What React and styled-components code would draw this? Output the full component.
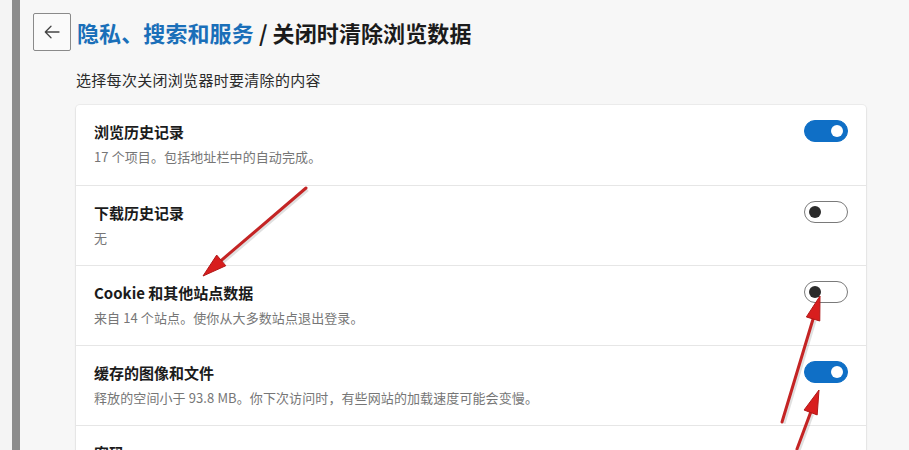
import React from "react";
import styled, { createGlobalStyle } from "styled-components";

const GlobalStyle = createGlobalStyle`
  html, body {
    margin: 0;
    padding: 0;
    background: #f7f7f7;
    font-family: "Noto Sans CJK SC", "Noto Sans", sans-serif;
    color: #1b1b1b;
  }
`;

const rows = [
  { title: "浏览历史记录", desc: "17 个项目。包括地址栏中的自动完成。", on: true },
  { title: "下载历史记录", desc: "无", on: false },
  { title: "Cookie 和其他站点数据", desc: "来自 14 个站点。使你从大多数站点退出登录。", on: false },
  { title: "缓存的图像和文件", desc: "释放的空间小于 93.8 MB。你下次访问时，有些网站的加载速度可能会变慢。", on: true },
  { title: "密码", desc: "", on: null },
];

// red annotation arrows: [tailX, tailY, tipX, tipY]
const arrows = [
  [306, 188, 203, 276],
  [782, 422, 820, 296],
  [797, 449, 819, 390],
];

function Arrow({ a }) {
  const [x1, y1, x2, y2] = a;
  const dx = x2 - x1;
  const dy = y2 - y1;
  const len = Math.hypot(dx, dy);
  const ux = dx / len;
  const uy = dy / len;
  const L = 24;
  const W = 7;
  const bx = x2 - ux * L;
  const by = y2 - uy * L;
  const px = -uy * W;
  const py = ux * W;
  const head = `${x2},${y2} ${bx + px},${by + py} ${bx - px},${by - py}`;
  return (
    <g>
      <line x1={x1 + 1.5} y1={y1 + 1.5} x2={bx + 1.5} y2={by + 1.5} stroke="rgba(0,0,0,0.12)" strokeWidth="4" />
      <line x1={x1} y1={y1} x2={bx + ux * 6} y2={by + uy * 6} stroke="#c42424" strokeWidth="3" strokeLinecap="round" />
      <polygon points={head} fill="#d81e1e" stroke="#b01818" strokeWidth="1" strokeLinejoin="round" />
    </g>
  );
}

export default function App() {
  return (
    <>
      <GlobalStyle />
      <Page>
        <Edge />
        <Rail />
        <Main>
          <Header>
            <BackButton aria-label="back">
              <svg width="20" height="20" viewBox="0 0 20 20" fill="none">
                <path d="M17 10H3.5M9 4.3L3.3 10 9 15.7" stroke="#444" strokeWidth="1.3" strokeLinecap="round" strokeLinejoin="round" />
              </svg>
            </BackButton>
            <Title>
              <Crumb>隐私、搜索和服务</Crumb> / 关闭时清除浏览数据
            </Title>
          </Header>
          <Intro>选择每次关闭浏览器时要清除的内容</Intro>
          <Card>
            {rows.map((r, i) => (
              <Row key={i} $first={i === 0}>
                <Text>
                  <RowTitle>{r.title}</RowTitle>
                  {r.desc && <RowDesc>{r.desc}</RowDesc>}
                </Text>
                {r.on !== null && (
                  <Toggle $on={r.on}>
                    <Knob $on={r.on} />
                  </Toggle>
                )}
              </Row>
            ))}
          </Card>
        </Main>
        <Overlay width="909" height="450" viewBox="0 0 909 450">
          {arrows.map((a, i) => (
            <Arrow key={i} a={a} />
          ))}
        </Overlay>
      </Page>
    </>
  );
}

const Page = styled.div`
  position: relative;
  width: 909px;
  height: 450px;
  overflow: hidden;
  display: flex;
  background: #f7f7f7;
`;

const Edge = styled.div`
  width: 12px;
  flex-shrink: 0;
  background: #f4f4f4;
`;

const Rail = styled.div`
  width: 8px;
  flex-shrink: 0;
  background: #8c8c8c;
`;

const Main = styled.div`
  padding: 13px 0 0 13px;
  display: flex;
  flex-direction: column;
`;

const Header = styled.div`
  display: flex;
  align-items: center;
  gap: 6px;
`;

const BackButton = styled.button`
  width: 38px;
  height: 38px;
  box-sizing: border-box;
  border: 1px solid #8a8a8a;
  border-radius: 2px;
  background: #fafafa;
  display: flex;
  align-items: center;
  justify-content: center;
  padding: 0;
`;

const Title = styled.h1`
  margin: 0;
  font-size: 22px;
  font-weight: 700;
  line-height: 30px;
  color: #1b1b1b;
  letter-spacing: 0.1px;
`;

const Crumb = styled.span`
  color: #1a6fb9;
`;

const Intro = styled.div`
  margin: 18px 0 0 43px;
  font-size: 15px;
  line-height: 22px;
  letter-spacing: 0.3px;
  color: #2b2b2b;
`;

const Card = styled.div`
  margin: 14px 0 0 43px;
  width: 790px;
  background: #fff;
  border-radius: 4px;
  box-shadow: 0 0 0 1px rgba(0, 0, 0, 0.04), 0 1px 3px rgba(0, 0, 0, 0.08);
`;

const Row = styled.div`
  display: flex;
  align-items: flex-start;
  justify-content: space-between;
  height: 80px;
  box-sizing: border-box;
  padding: 16px 18px 0 18px;
  border-top: ${(p) => (p.$first ? "none" : "1px solid #e6e6e6")};
`;

const Text = styled.div`
  display: flex;
  flex-direction: column;
  gap: 4px;
`;

const RowTitle = styled.div`
  font-size: 15px;
  font-weight: 700;
  line-height: 22px;
  color: #1b1b1b;
`;

const RowDesc = styled.div`
  font-size: 13px;
  line-height: 20px;
  letter-spacing: 0.1px;
  color: #767676;
`;

const Toggle = styled.div`
  width: 44px;
  height: 22px;
  box-sizing: border-box;
  margin-top: -1px;
  border-radius: 11px;
  position: relative;
  flex-shrink: 0;
  background: ${(p) => (p.$on ? "#0f6fc6" : "#fff")};
  border: 1px solid ${(p) => (p.$on ? "#0f6fc6" : "#7a7a7a")};
`;

const Knob = styled.span`
  position: absolute;
  top: 4px;
  width: 12px;
  height: 12px;
  border-radius: 50%;
  left: ${(p) => (p.$on ? "26px" : "4px")};
  background: ${(p) => (p.$on ? "#fff" : "#2a2a2a")};
`;

const Overlay = styled.svg`
  position: absolute;
  left: 0;
  top: 0;
  pointer-events: none;
`;
